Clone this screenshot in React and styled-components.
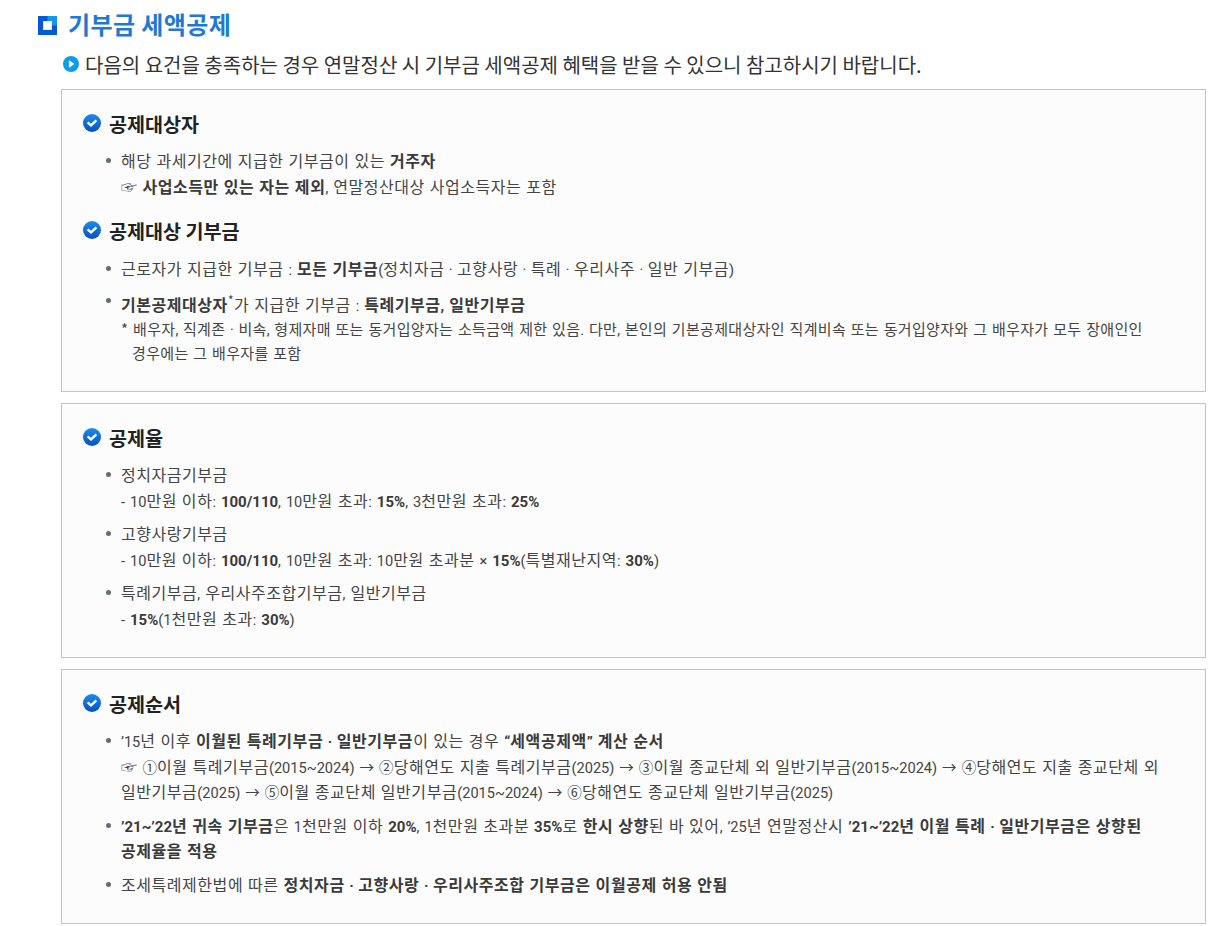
import React from 'react';
import styled, { createGlobalStyle } from 'styled-components';

const GlobalStyle = createGlobalStyle`
  html, body {
    margin: 0;
    padding: 0;
    background: #fff;
  }
  body {
    font-family: "Noto Sans CJK KR", "Noto Sans", sans-serif;
    color: #444;
  }
`;

// **text** is bold; digits and punctuation go in a narrower latin run
const plain = (str, key) =>
  str.split(/( · |[0-9()~%/,:.×’“”→①②③④⑤⑥-]+)/).map((part, i) =>
    i % 2 ? <Num key={`${key}-${i}`}>{part}</Num> : part
  );

const rich = (str) =>
  str.split('**').map((part, i) =>
    i % 2 ? <b key={i}>{plain(part, i)}</b> : plain(part, i)
  );

const SquareIcon = () => (
  <svg width="19" height="19" viewBox="0 0 19 19">
    <rect width="19" height="19" fill="#0659d4" />
    <rect x="9.5" width="9.5" height="9.5" fill="#1796ea" />
    <rect x="5" y="5" width="9" height="9" fill="#d6e8fa" />
    <rect x="6" y="6" width="7" height="7" fill="#fff" />
  </svg>
);

const PlayIcon = () => (
  <svg width="16" height="16" viewBox="0 0 16 16">
    <circle cx="8" cy="8" r="8" fill="#0f9be8" />
    <path d="M6.4 4.8 L10.8 8 L6.4 11.2 Z" fill="#fff" stroke="#fff" strokeWidth="0.8" strokeLinejoin="round" />
  </svg>
);

const CheckIcon = () => (
  <svg width="18" height="18" viewBox="0 0 18 18">
    <defs>
      <linearGradient id="ck" x1="0" y1="0" x2="0" y2="1">
        <stop offset="0" stopColor="#1c8cf0" />
        <stop offset="1" stopColor="#0850bd" />
      </linearGradient>
    </defs>
    <circle cx="9" cy="9" r="9" fill="url(#ck)" />
    <path d="M4.6 8.4 L8 11.4 L13.4 6.4" fill="none" stroke="#fff" strokeWidth="2.4" />
  </svg>
);

const Line = ({ text }) => (
  <>
    {rich(text)}
    <br />
  </>
);

export default function App() {
  return (
    <Wrap>
      <GlobalStyle />
      <Title>
        <SquareIcon />
        <TitleText>기부금 세액공제</TitleText>
      </Title>
      <Lead>
        <PlayIcon />
        <span>다음의 요건을 충족하는 경우 연말정산 시 기부금 세액공제 혜택을 받을 수 있으니 참고하시기 바랍니다.</span>
      </Lead>

      <Box $height={303}>
        <Heading $bottom={11}>
          <CheckIcon />
          공제대상자
        </Heading>
        <List>
          <Item>
            <Line text="해당 과세기간에 지급한 기부금이 있는 **거주자**" />
            <Line text="☞ **사업소득만 있는 자는 제외**, 연말정산대상 사업소득자는 포함" />
          </Item>
        </List>
        <Heading $top={17} $bottom={12}>
          <CheckIcon />
          공제대상 기부금
        </Heading>
        <List>
          <Item $gap={10}>
            <Line text="근로자가 지급한 기부금 : **모든 기부금**(정치자금 · 고향사랑 · 특례 · 우리사주 · 일반 기부금)" />
          </Item>
          <Item $dot={6}>
            <b>기본공제대상자</b>
            <Sup>*</Sup>
            {rich('가 지급한 기부금 : **특례기부금, 일반기부금**')}
            <Note>
              {rich('* 배우자, 직계존 · 비속, 형제자매 또는 동거입양자는 소득금액 제한 있음. 다만, 본인의 기본공제대상자인 직계비속 또는 동거입양자와 그 배우자가 모두 장애인인 경우에는 그 배우자를 포함')}
            </Note>
          </Item>
        </List>
      </Box>

      <Box $height={255}>
        <Heading $bottom={11}>
          <CheckIcon />
          공제율
        </Heading>
        <List>
          <Item>
            <Line text="정치자금기부금" />
            <Line text="- 10만원 이하: **100/110**, 10만원 초과: **15%**, 3천만원 초과: **25%**" />
          </Item>
          <Item>
            <Line text="고향사랑기부금" />
            <Line text="- 10만원 이하: **100/110**, 10만원 초과: 10만원 초과분 × **15%**(특별재난지역: **30%**)" />
          </Item>
          <Item>
            <Line text="특례기부금, 우리사주조합기부금, 일반기부금" />
            <Line text="- **15%**(1천만원 초과: **30%**)" />
          </Item>
        </List>
      </Box>

      <Box $height={255}>
        <Heading $bottom={11}>
          <CheckIcon />
          공제순서
        </Heading>
        <List>
          <Item>
            <Line text="’15년 이후 **이월된 특례기부금 · 일반기부금**이 있는 경우 **“세액공제액” 계산 순서**" />
            <Line text="☞ ①이월 특례기부금(2015~2024) → ②당해연도 지출 특례기부금(2025) → ③이월 종교단체 외 일반기부금(2015~2024) → ④당해연도 지출 종교단체 외 일반기부금(2025) → ⑤이월 종교단체 일반기부금(2015~2024) → ⑥당해연도 종교단체 일반기부금(2025)" />
          </Item>
          <Item>
            <Line text="**’21~’22년 귀속 기부금**은 1천만원 이하 **20%**, 1천만원 초과분 **35%**로 **한시 상향**된 바 있어, ’25년 연말정산시 **’21~’22년 이월 특례 · 일반기부금은 상향된 공제율을 적용**" />
          </Item>
          <Item>
            <Line text="조세특례제한법에 따른 **정치자금 · 고향사랑 · 우리사주조합 기부금은 이월공제 허용 안됨**" />
          </Item>
        </List>
      </Box>
    </Wrap>
  );
}

const Wrap = styled.div`
  width: 1232px;
  height: 926px;
  box-sizing: border-box;
  padding: 8px 26px 0 38px;
  overflow: hidden;
`;

const Title = styled.h2`
  display: flex;
  align-items: center;
  gap: 11px;
  margin: 0;
  height: 34px;
  font-size: 24px;
  font-weight: 700;
  letter-spacing: 0.4px;
  color: #1e78d4;
`;

const TitleText = styled.span`
  padding-bottom: 3px;
`;

const Lead = styled.p`
  display: flex;
  align-items: center;
  gap: 6px;
  margin: 6px 0 9px 25px;
  height: 32px;
  font-size: 20px;
  color: #333;
`;

const Box = styled.section`
  box-sizing: border-box;
  height: ${({ $height }) => $height}px;
  margin: 0 0 11px 23px;
  padding: 19px 21px 0;
  border: 1px solid #c4c4c4;
  background: #fcfcfd;
`;

const Heading = styled.h3`
  display: flex;
  align-items: center;
  gap: 8px;
  margin: ${({ $top }) => $top || 0}px 0 ${({ $bottom }) => $bottom || 9}px;
  height: 28px;
  font-size: 19.6px;
  font-weight: 700;
  color: #222;
`;

const List = styled.ul`
  list-style: none;
  margin: 0;
  padding: 0 21px 0 38px;
`;

const Item = styled.li`
  position: relative;
  margin-bottom: ${({ $gap }) => $gap || 8}px;
  font-size: 16px;
  line-height: 25.6px;
  letter-spacing: 0.55px;
  word-spacing: 0.8px;
  word-break: keep-all;
  color: #444;

  &::before {
    content: '';
    position: absolute;
    left: -15px;
    top: ${({ $dot }) => $dot || 10}px;
    width: 5px;
    height: 5px;
    border-radius: 50%;
    background: #666b78;
  }

  b {
    font-weight: 700;
    color: #3a3a3a;
  }
`;

const Num = styled.span`
  font-family: Roboto, "Noto Sans CJK KR", sans-serif;
  font-size: 14.6px;
  line-height: 1;
  letter-spacing: 0;

  b & {
    font-size: 15px;
  }
`;

const Sup = styled.span`
  position: relative;
  top: -6px;
  font-size: 12px;
  line-height: 1;
`;

const Note = styled.div`
  padding-left: 11px;
  text-indent: -11px;
  font-size: 15px;
  line-height: 24px;
  letter-spacing: 0.33px;
  word-spacing: 1px;
`;
